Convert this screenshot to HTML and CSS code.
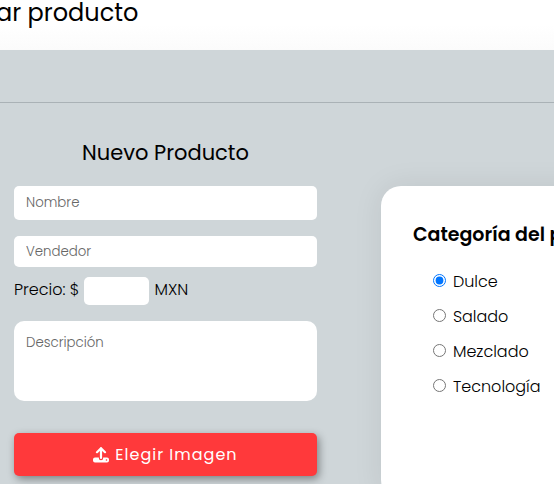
FILE: index.html
```html
<!DOCTYPE html>
<html lang="es">
<head>
<meta charset="utf-8">
<meta name="viewport" content="width=device-width, initial-scale=1">
<title>Nuevo Producto</title>
<link rel="stylesheet" href="styles.css">
</head>
<body>
<header class="topbar"><h1 class="topbar-title">ar producto</h1></header>
<div class="divider"></div>
<main class="content">
  <form class="product-form">
    <h2 class="form-title">Nuevo Producto</h2>
    <input class="field field-name" type="text" placeholder="Nombre" aria-label="Nombre">
    <input class="field field-seller" type="text" placeholder="Vendedor" aria-label="Vendedor">
    <div class="price-row">
      <label for="price">Precio: $</label>
      <input class="price" id="price" type="text" inputmode="decimal">
      <span>MXN</span>
    </div>
    <textarea class="field description" placeholder="Descripción" aria-label="Descripción"></textarea>
    <button class="upload" type="button">
      <svg class="upload-icon" viewBox="0 0 16 16" aria-hidden="true">
        <path d="M8 1.2V11M4 5.2L8 1.2L12 5.2" fill="none" stroke="currentColor" stroke-width="2.2" stroke-linecap="round" stroke-linejoin="round"/>
        <path fill="currentColor" fill-rule="evenodd" d="M2 10.5H5.8V11A2.2 2.2 0 0 0 10.2 11V10.5H14A2 2 0 0 1 16 12.5V13.5A2 2 0 0 1 14 15.5H2A2 2 0 0 1 0 13.5V12.5A2 2 0 0 1 2 10.5ZM13.5 12.2A.8.8 0 1 0 13.5 13.8A.8.8 0 1 0 13.5 12.2Z"/>
      </svg>
      <span>Elegir Imagen</span>
    </button>
  </form>
  <section class="card">
    <h3 class="card-title">Categoría del producto</h3>
    <div class="options">
      <label class="option"><input type="radio" name="category" checked>Dulce</label>
      <label class="option"><input type="radio" name="category">Salado</label>
      <label class="option"><input type="radio" name="category">Mezclado</label>
      <label class="option"><input type="radio" name="category">Tecnología</label>
    </div>
  </section>
</main>
</body>
</html>
```
FILE: styles.css
```css
* { box-sizing: border-box; }

body {
  margin: 0;
  overflow: hidden;
  background: #cfd6d9;
  color: #000;
  font: 300 16px/24px Poppins, Inter, "Open Sans", sans-serif;
}

h1, h2, h3 { margin: 0; white-space: nowrap; }

input, textarea, button { font-family: inherit; }

.topbar {
  height: 50px;
  background: linear-gradient(#fff 50%, #fbfbfb);
}

.topbar-title {
  margin-left: -4px;
  font-size: 24px;
  font-weight: 400;
  line-height: 26px;
}

.divider {
  height: 53px;
  border-bottom: 1px solid #aab2b6;
}

.content {
  display: grid;
  grid-template-columns: minmax(0, 7fr) minmax(0, 4fr);
  column-gap: 64px;
  align-items: start;
  padding: 34px 0 24px 14px;
}

.product-form {
  display: flex;
  flex-direction: column;
}

.form-title {
  margin-bottom: 17px;
  font-size: 21px;
  font-weight: 400;
  line-height: 32px;
  text-align: center;
}

.field {
  width: 100%;
  padding: 0 12px;
  border: 0;
  border-radius: 5px;
  background: #fff;
  font-weight: 300;
}

.field::placeholder { color: #666; opacity: 1; }

.field-name {
  height: 34px;
  margin-bottom: 16px;
}

.field-seller {
  height: 31px;
  margin-bottom: 10px;
}

.price-row {
  display: flex;
  align-items: flex-start;
  gap: 5px;
  margin-bottom: 16px;
  line-height: 26px;
}

.price {
  width: 65px;
  height: 28px;
  padding: 0 8px;
  border: 0;
  border-radius: 5px;
  background: #fff;
}

.description {
  height: 80px;
  padding: 12px;
  border-radius: 10px;
  line-height: 20px;
  resize: none;
}

.upload {
  display: flex;
  align-items: center;
  justify-content: center;
  gap: 6px;
  height: 43px;
  margin-top: 32px;
  border: 0;
  border-radius: 5px;
  background: #ff393b;
  box-shadow: 2px 3px 8px rgba(0, 0, 0, .4);
  color: #fff;
  font-size: 16px;
  font-weight: 400;
  letter-spacing: 1px;
}

.upload-icon {
  width: 16px;
  height: 16px;
}

.card {
  min-height: 314px;
  margin: 49px -80px 0 0;
  padding: 32px;
  border-radius: 20px;
  background: #fff;
  box-shadow: 0 0 30px rgba(0, 0, 0, .08);
}

.card-title {
  font-size: 19px;
  font-weight: 600;
  line-height: 34px;
}

.options {
  display: grid;
  gap: 11px;
  padding: 18px 20px;
}

.option {
  display: flex;
  align-items: flex-start;
  gap: 7px;
  line-height: 24px;
}

.option input {
  width: 13px;
  height: 13px;
  margin: 4px 0 0;
}
```
